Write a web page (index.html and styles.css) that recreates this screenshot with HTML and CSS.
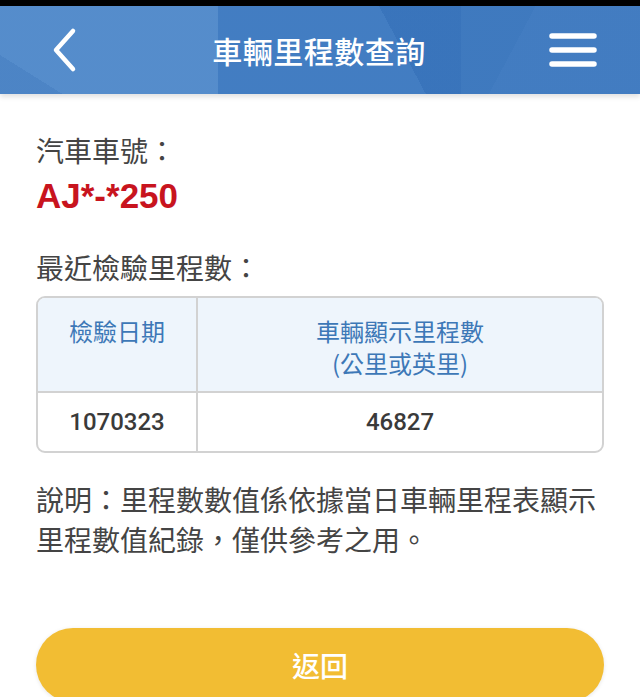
FILE: index.html
```html
<html>
    <head>
        <title>車輛里程數查詢</title>
        <link rel="stylesheet" href="styles.css">
    </head>
    <body>
        <div class="status-bar"></div>
        <div class="header">
            <button class="back-btn">
                <svg width="30" height="46" viewBox="0 0 30 46">
                    <path d="M23 4 L6 23 L23 42" fill="none" stroke="#fff" stroke-width="4.5" stroke-linecap="round" stroke-linejoin="round"/>
                </svg>
            </button>
            <h1 class="title">車輛里程數查詢</h1>
            <button class="menu-btn">
                <svg width="50" height="40" viewBox="0 0 50 40">
                    <path d="M4 6 H46 M4 20 H46 M4 34 H46" stroke="#fff" stroke-width="5.5" stroke-linecap="round"/>
                </svg>
            </button>
        </div>

        <div class="content">
            <div class="label first">汽車車號：</div>
            <div class="plate">AJ*-*250</div>

            <div class="label second">最近檢驗里程數：</div>

            <div class="mileage-table">
                <div class="row head">
                    <div class="cell date">檢驗日期</div>
                    <div class="cell km">車輛顯示里程數<br>(公里或英里)</div>
                </div>
                <div class="row body">
                    <div class="cell date">1070323</div>
                    <div class="cell km">46827</div>
                </div>
            </div>

            <p class="note">說明：里程數數值係依據當日車輛里程表顯示里程數值紀錄，僅供參考之用。</p>

            <button class="return-btn">返回</button>
        </div>
    </body>
</html>
```

FILE: styles.css
```css
body {
    margin: 0;
    background-color: #fff;
    font-family: "Noto Sans CJK TC", "Noto Sans", sans-serif;
    color: #444;
    overflow: hidden;
}

.status-bar {
    height: 6px;
    background-color: #000;
}

.header {
    height: 88px;
    display: flex;
    align-items: center;
    justify-content: space-between;
    padding: 0 42px 0 50px;
    background-color: #4b85c7;
    background-image:
        linear-gradient(62deg, transparent 0 62%, rgba(40, 100, 175, 0.35) 62% 100%),
        linear-gradient(118deg, transparent 0 78%, rgba(90, 145, 210, 0.35) 78% 100%),
        linear-gradient(90deg, rgba(95, 148, 208, 0.5) 0 34%, rgba(50, 110, 185, 0.35) 34% 72%, transparent 72% 100%),
        linear-gradient(32deg, rgba(40, 100, 175, 0.5) 0 8%, transparent 8% 100%);
    box-shadow: 0 3px 5px rgba(0, 0, 0, 0.12);
}

.back-btn,
.menu-btn {
    background: none;
    border: none;
    padding: 0;
    display: flex;
}

.title {
    margin: 0;
    font-size: 30px;
    font-weight: 500;
    color: #fff;
    letter-spacing: 0.5px;
    padding-left: 10px;
}

.content {
    padding: 0 36px;
}

.label {
    font-size: 28px;
    line-height: 40px;
    color: #444;
}

.label.first {
    margin-top: 36px;
}

.plate {
    margin-top: 6px;
    font-family: "Liberation Sans", Arial, sans-serif;
    font-weight: bold;
    font-size: 35px;
    line-height: 40px;
    color: #c8141e;
}

.label.second {
    margin-top: 31px;
}

.mileage-table {
    margin-top: 9px;
    border: 2px solid #d2d2d2;
    border-radius: 9px;
    overflow: hidden;
}

.row {
    display: flex;
}

.row.head {
    height: 93px;
    background-color: #eef5fc;
    border-bottom: 2px solid #d2d2d2;
}

.row.body {
    height: 58px;
}

.cell {
    text-align: center;
    font-size: 24px;
}

.cell.date {
    width: 158px;
    border-right: 2px solid #d2d2d2;
}

.cell.km {
    flex: 1;
}

.head .cell {
    color: #3d78b7;
    line-height: 32px;
    padding-top: 17px;
}

.body .cell {
    font-family: Roboto, "Noto Sans", sans-serif;
    font-weight: 500;
    color: #3a3a3a;
    line-height: 58px;
}

.note {
    margin: 26px 0 0;
    font-size: 28px;
    line-height: 40px;
    color: #444;
}

.return-btn {
    display: block;
    width: 100%;
    height: 74px;
    margin-top: 69px;
    border: none;
    border-radius: 37px;
    background-color: #f2bd33;
    color: #fff;
    font-family: "Noto Sans CJK TC", sans-serif;
    font-size: 28px;
    font-weight: 500;
    box-shadow: 0 1px 4px rgba(0, 0, 0, 0.1);
}
```
